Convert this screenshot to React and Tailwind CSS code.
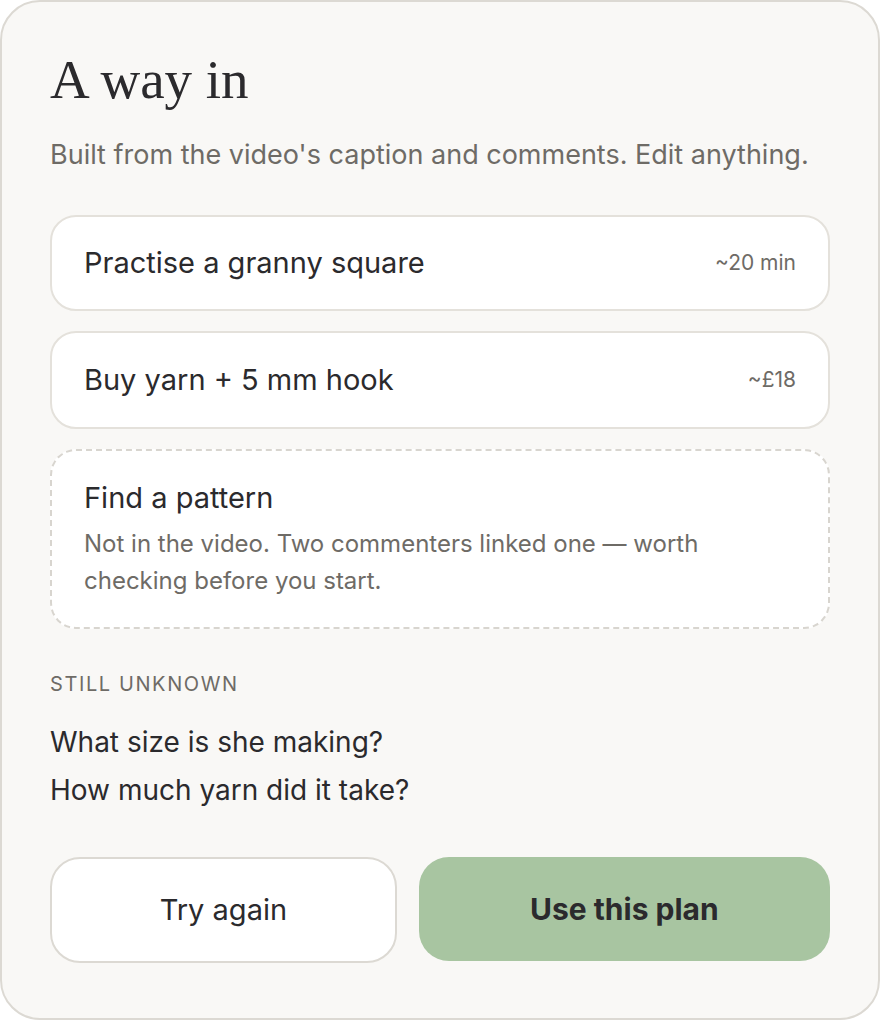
export default function App() {
  const sans = { fontFamily: 'Inter, "Liberation Sans", sans-serif' };
  return (
    <div className="w-[880px] h-[1020px] bg-white" style={sans}>
      <div className="h-full rounded-[40px] border-2 border-[#dcd9d3] bg-[#f9f8f6] px-[48px] pt-[46px] text-[#2b2a2d]">
        <h1 className="text-[55px] leading-[64px] text-[#2b2a2d]" style={{ fontFamily: '"Liberation Serif", serif' }}>
          A way in
        </h1>
        <p className="mt-[25px] text-[27px] leading-[36px] text-[#6e6b66]">
          Built from the video's caption and comments. Edit anything.
        </p>

        <div className="mt-[42px] flex flex-col gap-[20px]">
          <div className="flex h-[96px] items-center justify-between rounded-[26px] border-2 border-[#e4e1db] bg-white px-[32px]">
            <span className="text-[29px]">Practise a granny square</span>
            <span className="text-[21px] text-[#6e6b66]">~20 min</span>
          </div>
          <div className="flex h-[98px] items-center justify-between rounded-[26px] border-2 border-[#e4e1db] bg-white px-[32px]">
            <span className="text-[29px]">Buy yarn + 5 mm hook</span>
            <span className="text-[21px] text-[#6e6b66]">~£18</span>
          </div>
          <div className="h-[180px] rounded-[26px] border-2 border-dashed border-[#d8d5cf] bg-white px-[32px] pt-[28px]">
            <div className="text-[29px] leading-[38px]">Find a pattern</div>
            <p className="mt-[8px] max-w-[680px] text-[24px] leading-[37px] text-[#6e6b66]">
              Not in the video. Two commenters linked one — worth checking before you start.
            </p>
          </div>
        </div>

        <div className="mt-[41px] text-[20px] leading-[28px] uppercase tracking-[0.08em] text-[#6e6b66]">Still unknown</div>
        <div className="mt-[24px] flex flex-col gap-[8px] text-[28px] leading-[40px]">
          <div>What size is she making?</div>
          <div>How much yarn did it take?</div>
        </div>

        <div className="mt-[47px] flex items-start gap-[22px]">
          <button className="h-[106px] flex-[5] rounded-[30px] border-2 border-[#dcd9d3] bg-white text-[29px] text-[#2b2a2d]">
            Try again
          </button>
          <button className="h-[104px] flex-[6] rounded-[30px] bg-[#a8c5a1] text-[30px] font-bold text-[#2b2a2d]">
            Use this plan
          </button>
        </div>
      </div>
    </div>
  );
}
